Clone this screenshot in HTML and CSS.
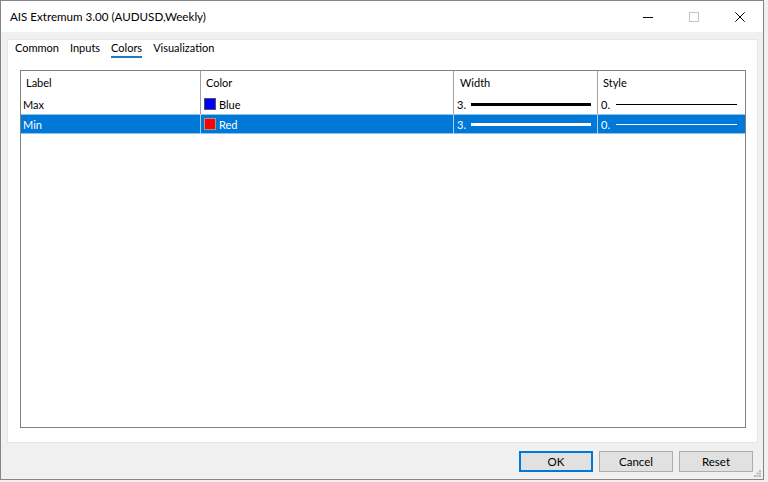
FILE: index.html
```html
<!DOCTYPE html>
<html lang="en">
<head>
    <meta charset="UTF-8">
    <title>AIS Extremum 3.00 (AUDUSD,Weekly)</title>
    <link rel="stylesheet" href="styles.css">
</head>
<body>
    <div class="window">
        <div class="titlebar">
            <span class="title">AIS Extremum 3.00 (AUDUSD,Weekly)</span>
            <div class="caption">
                <span class="cap-btn">
                    <svg width="10" height="10" viewBox="0 0 10 10"><path d="M0 5.5H10" stroke="#000" stroke-width="1"/></svg>
                </span>
                <span class="cap-btn">
                    <svg width="10" height="10" viewBox="0 0 10 10"><rect x="0.5" y="0.5" width="9" height="9" fill="none" stroke="#c4c4c4"/></svg>
                </span>
                <span class="cap-btn">
                    <svg width="10" height="10" viewBox="0 0 10 10"><path d="M0.3 0.3L9.7 9.7M9.7 0.3L0.3 9.7" stroke="#000" stroke-width="1"/></svg>
                </span>
            </div>
        </div>
        <div class="content">
            <div class="panel">
                <div class="tabs">
                    <span class="tab">Common</span>
                    <span class="tab">Inputs</span>
                    <span class="tab active">Colors</span>
                    <span class="tab">Visualization</span>
                </div>
                <div class="grid">
                    <div class="row head">
                        <div class="cell">Label</div>
                        <div class="cell">Color</div>
                        <div class="cell">Width</div>
                        <div class="cell">Style</div>
                    </div>
                    <div class="row">
                        <div class="cell">Max</div>
                        <div class="cell"><span class="swatch blue"></span>Blue</div>
                        <div class="cell width-cell">3.<span class="line thick"></span></div>
                        <div class="cell style-cell">0.<span class="line thin"></span></div>
                    </div>
                    <div class="row selected">
                        <div class="cell">Min</div>
                        <div class="cell"><span class="swatch red"></span>Red</div>
                        <div class="cell width-cell">3.<span class="line thick"></span></div>
                        <div class="cell style-cell">0.<span class="line thin"></span></div>
                    </div>
                </div>
            </div>
        </div>
        <div class="footer">
            <button class="btn default">OK</button>
            <button class="btn">Cancel</button>
            <button class="btn">Reset</button>
        </div>
        <svg class="grip" width="7" height="7" viewBox="0 0 7 7">
            <rect x="5" y="0" width="2" height="2" fill="#bcbcbc"/>
            <rect x="2.5" y="2.5" width="2" height="2" fill="#bcbcbc"/>
            <rect x="5" y="2.5" width="2" height="2" fill="#bcbcbc"/>
            <rect x="0" y="5" width="2" height="2" fill="#bcbcbc"/>
            <rect x="2.5" y="5" width="2" height="2" fill="#bcbcbc"/>
            <rect x="5" y="5" width="2" height="2" fill="#bcbcbc"/>
        </svg>
    </div>
</body>
</html>
```

FILE: styles.css
```css
* { box-sizing: border-box; }
body {
    margin: 0;
    background: #f0f0f0;
    font-family: Lato, "Noto Sans", sans-serif;
    font-size: 11px;
    color: #000;
}
.window {
    position: relative;
    width: 764px;
    height: 480px;
    border: 1px solid #858585;
    background: #f0f0f0;
    display: flex;
    flex-direction: column;
}
.titlebar {
    height: 31px;
    background: #fff;
    display: flex;
    align-items: center;
}
.title { flex: 1; padding-left: 9px; font-size: 11.6px; }
.caption { display: flex; align-self: stretch; }
.cap-btn {
    width: 46px;
    display: flex;
    align-items: center;
    justify-content: center;
}
.content { padding: 7px 5px 0 6px; }
.panel {
    height: 404px;
    background: #fff;
    border: 1px solid #e6e6e6;
    display: flex;
    flex-direction: column;
}
.tabs {
    height: 30px;
    display: flex;
    gap: 11px;
    padding-left: 7px;
    align-items: flex-start;
}
.tab {
    line-height: 16px;
    border-bottom: 2px solid transparent;
}
.tab.active { border-bottom-color: #1c7ccc; }
.grid {
    flex: 1;
    margin: 0 11px 14px 12px;
    border: 1px solid #828282;
}
.row {
    display: grid;
    grid-template-columns: 180px 253px 144px 1fr;
    height: 20px;
}
.row.head { height: 23px; }
.cell {
    display: flex;
    align-items: center;
    padding-left: 3px;
    border-right: 1px solid #a0a0a0;
    white-space: nowrap;
}
.cell:first-child { padding-left: 2px; }
.cell:last-child { border-right: none; }
.head .cell { padding-left: 5px; }
.head .cell:nth-child(3) { padding-left: 6px; }
.selected {
    background: #0078d7;
    color: #fff;
    box-shadow: inset 0 -1px 0 #8cc4f0, inset 0 1px 0 #8cc4f0;
}
.selected .cell { border-right-color: #a8d2f2; }
.swatch {
    width: 12px;
    height: 12px;
    margin-right: 3px;
    border: 1px solid #555;
}
.swatch.blue { background: #0000ff; }
.swatch.red { background: #ff0000; border-color: #9a9a9a; }
.line { flex: 1; background: #000; }
.selected .line { background: #fff; }
.line.thick { height: 3px; margin: 1px 6px 0 5px; }
.line.thin { height: 1px; margin: 1px 8px 0 6px; }
.footer {
    flex: 1;
    display: flex;
    justify-content: flex-end;
    align-items: flex-start;
    gap: 6px;
    padding: 8px 10px 0 0;
}
.btn {
    width: 74px;
    height: 21px;
    padding: 0;
    font-family: inherit;
    font-size: 11.5px;
    color: #000;
    background: #e1e1e1;
    border: 1px solid #adadad;
}
.btn.default { border: 2px solid #0078d7; }
.grip { position: absolute; right: 2px; bottom: 2px; }
```
